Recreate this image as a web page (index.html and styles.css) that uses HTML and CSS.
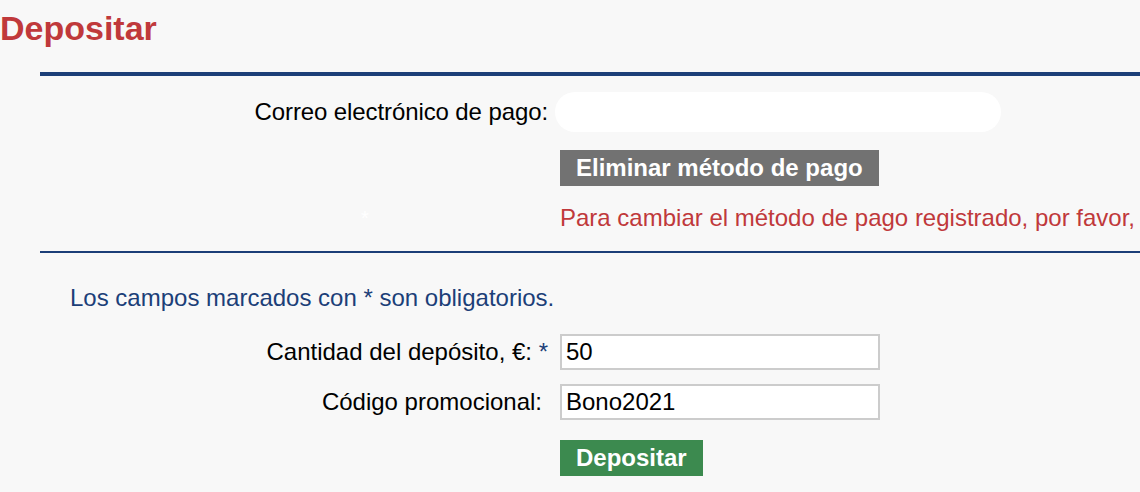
FILE: index.html
```html
<!DOCTYPE html>
<html lang="es">
<head>
<meta charset="utf-8">
<title>Depositar</title>
<link rel="stylesheet" href="styles.css">
</head>
<body>
<h1 class="title">Depositar</h1>

<section class="block block-method">
  <div class="form">
    <label class="label label-email" for="email">Correo electrónico de pago:</label>
    <input class="email-input" id="email" type="text" value="">

    <div class="label"></div>
    <div class="field"><button class="btn btn-gray" type="button">Eliminar método de pago</button></div>

    <div class="label label-star"><span class="white-star">*</span></div>
    <div class="note">Para cambiar el método de pago registrado, por favor, contacte con el servicio de atención al cliente.</div>
  </div>
</section>

<section class="block block-deposit">
  <p class="required">Los campos marcados con * son obligatorios.</p>
  <div class="form form-deposit">
    <label class="label" for="amount">Cantidad del depósito, €: <span class="req">*</span></label>
    <input class="text-input" id="amount" type="text" value="50">

    <label class="label label-promo" for="promo">Código promocional:</label>
    <input class="text-input" id="promo" type="text" value="Bono2021">

    <div class="label"></div>
    <div class="field field-submit"><button class="btn btn-green" type="button">Depositar</button></div>
  </div>
</section>
</body>
</html>
```

FILE: styles.css
```css
html, body {
  margin: 0;
  padding: 0;
  overflow: hidden;
}

body {
  background: #f8f8f8;
  font-family: "Liberation Sans", Arial, Helvetica, sans-serif;
  font-size: 24px;
  color: #000;
  width: 1140px;
  height: 492px;
}

.title {
  margin: 0;
  padding-top: 9px;
  font-size: 34px;
  line-height: 38px;
  font-weight: bold;
  color: #c0393b;
}

.block {
  margin-left: 40px;
}

.block-method {
  margin-top: 25px;
  border-top: 4px solid #1c3f78;
  padding-top: 16px;
  padding-bottom: 20px;
}

.block-deposit {
  border-top: 2px solid #1c3f78;
  padding-top: 31px;
}

.form {
  display: grid;
  grid-template-columns: 508px minmax(0, 1fr);
  column-gap: 12px;
  row-gap: 18px;
  align-items: center;
}

.label {
  text-align: right;
  line-height: 28px;
  white-space: nowrap;
}

.label-email {
  letter-spacing: -0.1px;
}

.label-promo {
  padding-right: 6px;
}

.label-star {
  text-align: left;
  padding-left: 321px;
  line-height: 26px;
}

.white-star {
  color: #ffffff;
  font-size: 20px;
}

.req {
  color: #1c3f78;
}

.email-input {
  justify-self: start;
  margin-left: -5px;
  width: 446px;
  height: 40px;
  box-sizing: border-box;
  border: none;
  border-radius: 20px;
  background: #ffffff;
  font-family: inherit;
  font-size: 24px;
  padding: 0 14px;
  outline: none;
}

.field {
  display: flex;
}

.btn {
  height: 36px;
  padding: 0 16px;
  border: none;
  border-radius: 0;
  font-family: inherit;
  font-size: 24px;
  font-weight: bold;
  color: #ffffff;
  line-height: 36px;
  cursor: pointer;
}

.btn-gray {
  background: #727272;
}

.btn-green {
  background: #3c8a4f;
}

.note {
  color: #c0393b;
  line-height: 26px;
  white-space: nowrap;
  overflow: hidden;
}

.required {
  margin: 0 0 22px 30px;
  color: #1c3f78;
  line-height: 28px;
}

.form-deposit {
  row-gap: 14px;
}

.text-input {
  justify-self: start;
  width: 320px;
  height: 36px;
  box-sizing: border-box;
  border: 2px solid #cccccc;
  border-radius: 0;
  background: #ffffff;
  font-family: inherit;
  font-size: 24px;
  color: #000;
  padding: 0 4px;
  outline: none;
}

.field-submit {
  margin-top: 6px;
}
```
